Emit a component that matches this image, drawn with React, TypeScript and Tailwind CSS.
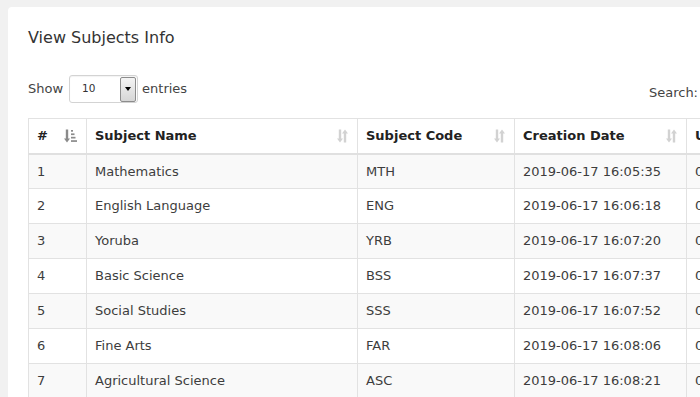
import React from "react";

const rows = [
  { id: 1, name: "Mathematics", code: "MTH", created: "2019-06-17 16:05:35" },
  { id: 2, name: "English Language", code: "ENG", created: "2019-06-17 16:06:18" },
  { id: 3, name: "Yoruba", code: "YRB", created: "2019-06-17 16:07:20" },
  { id: 4, name: "Basic Science", code: "BSS", created: "2019-06-17 16:07:37" },
  { id: 5, name: "Social Studies", code: "SSS", created: "2019-06-17 16:07:52" },
  { id: 6, name: "Fine Arts", code: "FAR", created: "2019-06-17 16:08:06" },
  { id: 7, name: "Agricultural Science", code: "ASC", created: "2019-06-17 16:08:21" },
];

const font = { fontFamily: "'DejaVu Sans', sans-serif" };

function SortBoth() {
  return (
    <svg width="11" height="14" viewBox="0 0 11 14" className="shrink-0">
      <g fill="#d2d2d2">
        <rect x="1.8" y="0.5" width="2.4" height="9.5" />
        <polygon points="0,9.5 6,9.5 3,13.5" />
        <rect x="6.8" y="4" width="2.4" height="9.5" />
        <polygon points="5,4.5 11,4.5 8,0.5" />
      </g>
    </svg>
  );
}

function SortAsc() {
  return (
    <svg width="13" height="14" viewBox="0 0 13 14" className="shrink-0">
      <g fill="#8a8a8a">
        <rect x="1.8" y="0.5" width="2.4" height="9.5" />
        <polygon points="0,9.5 6,9.5 3,13.5" />
        <rect x="7" y="1" width="2" height="1.7" />
        <rect x="7" y="4.4" width="3.5" height="1.7" />
        <rect x="7" y="7.8" width="4.5" height="1.7" />
        <rect x="7" y="11.2" width="6" height="1.7" />
      </g>
    </svg>
  );
}

function HeaderCell({ label, width, active }: { label: string; width: string; active?: boolean }) {
  return (
    <th className={`${width} border-r border-[#e2e2e2] px-2 text-left font-bold text-[13px] text-[#222]`}>
      <div className="flex items-center justify-between pr-[1px]">
        <span>{label}</span>
        {active ? <SortAsc /> : <SortBoth />}
      </div>
    </th>
  );
}

export default function App() {
  return (
    <div className="w-[700px] h-[397px] overflow-hidden bg-[#f1f1f1] pl-[8px] pt-[7px]" style={font}>
      <div className="w-[900px] h-[420px] bg-white rounded-[4px] px-[20px] pt-[19px]">
        <h3 className="text-[16px] leading-[24px] text-[#333]">View Subjects Info</h3>

        <div className="mt-[25px] flex items-center w-[670px]">
          <span className="text-[13px] text-[#444]">Show</span>
          <div className="ml-[6px] w-[69px] h-[28px] border border-[#d3d3d3] rounded-[3px] flex items-center justify-between pl-[12px] pr-[1px] shadow-[inset_0_1px_1px_rgba(0,0,0,0.05)]">
            <span className="text-[10.5px] text-[#333]">10</span>
            <div className="w-[16px] h-[25px] border border-[#8c8c8c] rounded-[2px] bg-gradient-to-b from-[#f4f4f4] to-[#d6d6d6] flex items-center justify-center">
              <div className="w-0 h-0 border-l-[3.5px] border-r-[3.5px] border-t-[4px] border-l-transparent border-r-transparent border-t-black" />
            </div>
          </div>
          <span className="ml-[4px] text-[13px] text-[#444]">entries</span>
          <span className="ml-auto mt-[8px] text-[13px] text-[#444]">Search:</span>
        </div>

        <table className="mt-[15px] w-[860px] border-collapse table-fixed text-[13px] text-[#3d3d3d]">
          <thead>
            <tr className="h-[35px] border-t border-l border-[#e2e2e2] border-b-2 border-b-[#e0e0e0]">
              <HeaderCell label="#" width="w-[58px]" active />
              <HeaderCell label="Subject Name" width="w-[271px]" />
              <HeaderCell label="Subject Code" width="w-[157px]" />
              <HeaderCell label="Creation Date" width="w-[172px]" />
              <HeaderCell label="Updation Date" width="w-[202px]" />
            </tr>
          </thead>
          <tbody>
            {rows.map((r, i) => (
              <tr
                key={r.id}
                className={`h-[35px] border-l border-b border-[#e2e2e2] ${i % 2 === 0 ? "bg-[#f9f9f9]" : "bg-white"}`}
              >
                <td className="px-2 border-r border-[#e2e2e2]">{r.id}</td>
                <td className="px-2 border-r border-[#e2e2e2]">{r.name}</td>
                <td className="px-2 border-r border-[#e2e2e2]">{r.code}</td>
                <td className="px-2 border-r border-[#e2e2e2]">{r.created}</td>
                <td className="px-2 border-r border-[#e2e2e2]">0000-00-00 00:00:00</td>
              </tr>
            ))}
          </tbody>
        </table>
      </div>
    </div>
  );
}
